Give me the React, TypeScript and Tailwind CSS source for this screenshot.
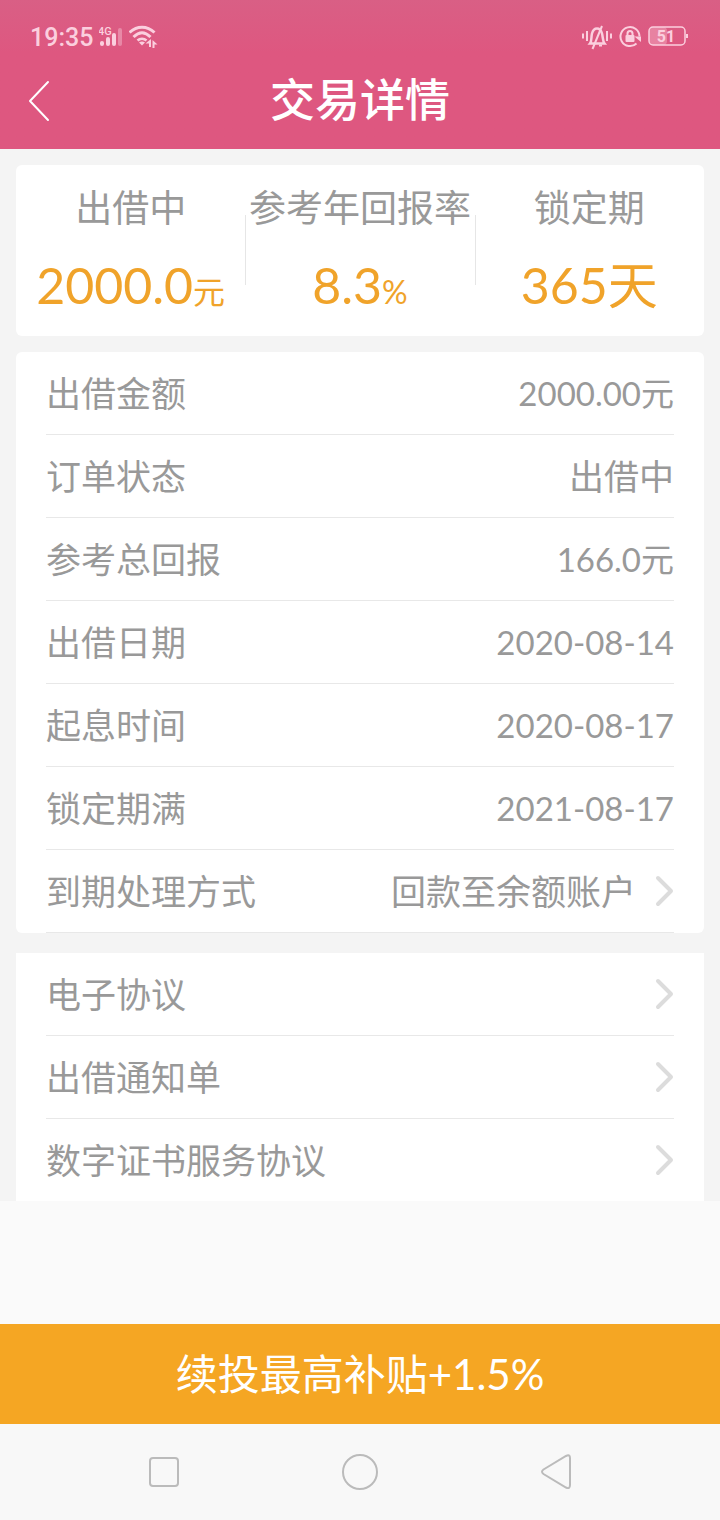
const summary = [
  { label: "出借中", value: "2000.0", unit: "元", unitClass: "text-[32px]" },
  { label: "参考年回报率", value: "8.3", unit: "%", unitClass: "text-[32px]" },
  { label: "锁定期", value: "365", unit: "天", unitClass: "" },
];

const details = [
  { label: "出借金额", value: "2000.00元", numeric: true },
  { label: "订单状态", value: "出借中", numeric: false },
  { label: "参考总回报", value: "166.0元", numeric: true },
  { label: "出借日期", value: "2020-08-14", numeric: true },
  { label: "起息时间", value: "2020-08-17", numeric: true },
  { label: "锁定期满", value: "2021-08-17", numeric: true },
];

const documents = ["电子协议", "出借通知单", "数字证书服务协议"];

const Chevron = () => (
  <svg width="20" height="32" viewBox="0 0 20 32" fill="none" className="shrink-0" aria-hidden="true">
    <path d="M4 3l13 13L4 29" stroke="#dcdcdc" strokeWidth="4" strokeLinecap="round" strokeLinejoin="round" />
  </svg>
);

const StatusBar = () => (
  <div className="h-[52px] flex items-end justify-between pl-[30px] pr-8 text-[#fbcfde]">
    <div className="flex items-end gap-1.5">
      <span className="font-['Roboto',sans-serif] text-[25px] leading-[28px] font-medium">19:35</span>
      <svg width="24" height="28" viewBox="0 0 24 28" fill="currentColor" role="img" aria-label="4G">
        <text x="-1" y="11" fontSize="11" fontWeight="500" fontFamily="Roboto, sans-serif">4G</text>
        <rect x="1" y="17" width="4" height="5" rx="2" />
        <rect x="7" y="13" width="4" height="9" rx="2" />
        <rect x="13" y="9" width="4" height="13" rx="2" />
        <rect x="19" y="4" width="4" height="18" rx="2" opacity="0.4" />
      </svg>
      <svg width="30" height="28" viewBox="0 0 30 28" fill="none" stroke="currentColor" strokeWidth="3" aria-label="Wi-Fi">
        <path d="M0.500 8.500C8 1.500 18 1.500 25.500 8.500" />
        <path d="M4.500 13C10 7.500 16 7.500 21.500 13" />
        <path d="M8.500 16.500C11 14 15 14 17.500 16.500" strokeWidth="2.500" />
        <path d="M10 18.500C12 17 14 17 16 18.500L13 21.500Z" fill="currentColor" stroke="none" />
        <path d="M22 15v8h-2v-3.500h-3.500zM23.500 24v-8l5 4.500h-3V24z" fill="currentColor" stroke="none" />
      </svg>
    </div>
    <div className="flex items-end gap-[7px]">
      <svg width="30" height="28" viewBox="0 0 30 28" fill="none" stroke="currentColor" strokeWidth="2" aria-label="静音">
        <path d="M1 9.500v5M5 7v10M25 7v10M29 9.500v5" />
        <path d="M8 19.500C10 17 9 13 10 9.500C11 6 13 4.500 15 4.500S19 6 20 9.500C21 13 20.500 17 22.500 19.500Z" strokeWidth="2.500" />
        <path d="M17 21.500h3" />
        <path d="M20 2L10.500 25" />
      </svg>
      <svg width="22" height="28" viewBox="0 0 22 28" fill="none" stroke="currentColor" strokeWidth="2" aria-label="方向锁定">
        <path d="M17.500 19.500A9.500 9.500 0 1 1 20.500 12.500" />
        <path d="M15.500 12.500h6.500v5.500z" fill="currentColor" stroke="none" />
        <rect x="6.500" y="11" width="9" height="7" rx="1" fill="currentColor" stroke="none" />
        <path d="M8.500 11V9.500a2.500 2.500 0 0 1 5 0V11" />
      </svg>
      <svg width="40" height="28" viewBox="0 0 40 28" fill="none" aria-label="电量 51%">
        <rect x="1" y="3" width="18" height="18" rx="4" fill="currentColor" opacity="0.35" />
        <rect x="1" y="3" width="36" height="18" rx="4" stroke="currentColor" strokeWidth="1.500" />
        <rect x="38" y="10" width="2" height="4" fill="currentColor" />
        <text x="18" y="18" textAnchor="middle" fontSize="16" fontWeight="700" fontFamily="Roboto, sans-serif" fill="currentColor">51</text>
      </svg>
    </div>
  </div>
);

const Header = () => (
  <header className="bg-linear-to-b from-[#d95f85] to-[#de5780] to-35%">
    <StatusBar />
    <div className="grid grid-cols-[80px_1fr_80px] items-center h-[97px] text-white">
      <button type="button" aria-label="返回" className="h-full pl-7">
        <svg width="22" height="42" viewBox="0 0 22 42" fill="none" stroke="currentColor" strokeWidth="2">
          <path d="M20 2L2 21l18 19" strokeLinecap="round" strokeLinejoin="round" />
        </svg>
      </button>
      <h1 className="pb-0.5 text-center text-[45px] leading-[60px] font-medium">交易详情</h1>
    </div>
  </header>
);

const Summary = () => (
  <section className="grid grid-cols-3 rounded-md bg-white h-[171px]">
    {summary.map((item, index) => (
      <div key={item.label} className="relative flex flex-col items-center pt-4 whitespace-nowrap">
        {index > 0 && <span className="absolute left-0 top-[50px] h-[70px] w-px bg-[#e6e6e6]" />}
        <p className="text-[37px] leading-[54px]">{item.label}</p>
        <p className="mt-5 text-[50px] leading-[60px] text-[#f0a32a]">
          {item.value}
          <span className={item.unitClass}>{item.unit}</span>
        </p>
      </div>
    ))}
  </section>
);

const Details = () => (
  <section className="mt-4 rounded-md bg-white px-[30px]">
    <dl>
      {details.map((row) => (
        <div key={row.label} className="flex items-center justify-between h-[83px] border-b border-[#e8e8e8]">
          <dt>{row.label}</dt>
          <dd className={row.numeric ? "text-[33px]" : ""}>{row.value}</dd>
        </div>
      ))}
    </dl>
    <button type="button" className="flex items-center w-full h-[83px] border-b border-[#e8e8e8]">
      <span>到期处理方式</span>
      <span className="ml-auto mr-[18px]">回款至余额账户</span>
      <Chevron />
    </button>
  </section>
);

const Documents = () => (
  <nav className="mt-5 bg-white px-[30px]">
    {documents.map((name) => (
      <a
        key={name}
        href="#"
        className="flex items-center justify-between h-[83px] border-b border-[#e8e8e8] last:h-[82px] last:border-b-0"
      >
        {name}
        <Chevron />
      </a>
    ))}
  </nav>
);

const SystemNav = () => (
  <div className="grid grid-cols-3 place-items-center h-24 px-[66px] bg-[#f8f8f8] text-[#bbb]">
    <button type="button" aria-label="最近任务">
      <svg width="40" height="40" viewBox="0 0 40 40" fill="none" stroke="currentColor" strokeWidth="2">
        <rect x="6" y="6" width="28" height="28" rx="3" />
      </svg>
    </button>
    <button type="button" aria-label="主屏幕">
      <svg width="40" height="40" viewBox="0 0 40 40" fill="none" stroke="currentColor" strokeWidth="2">
        <circle cx="20" cy="20" r="17" />
      </svg>
    </button>
    <button type="button" aria-label="返回上一级">
      <svg width="40" height="40" viewBox="0 0 40 40" fill="none" stroke="currentColor" strokeWidth="2">
        <path d="M7.500 17.500L30 4Q34 2 34 6V33Q34 37.500 30 35.500L7.500 22Q4.500 19.800 7.500 17.500Z" />
      </svg>
    </button>
  </div>
);

const App = () => {
  return (
    <div className="min-h-screen flex flex-col bg-[#fafafa] font-['Lato','Noto_Sans_CJK_SC',sans-serif] text-[#999]">
      <Header />
      <main className="flex-1 text-[35px] leading-[52px]">
        <div className="bg-[#f4f4f4] px-4 pt-4">
          <Summary />
          <Details />
          <Documents />
        </div>
      </main>
      <button type="button" className="h-[100px] bg-[#f5a623] text-white text-[42px] leading-[60px]">
        续投最高补贴+1.5%
      </button>
      <SystemNav />
    </div>
  );
};

export default App;
